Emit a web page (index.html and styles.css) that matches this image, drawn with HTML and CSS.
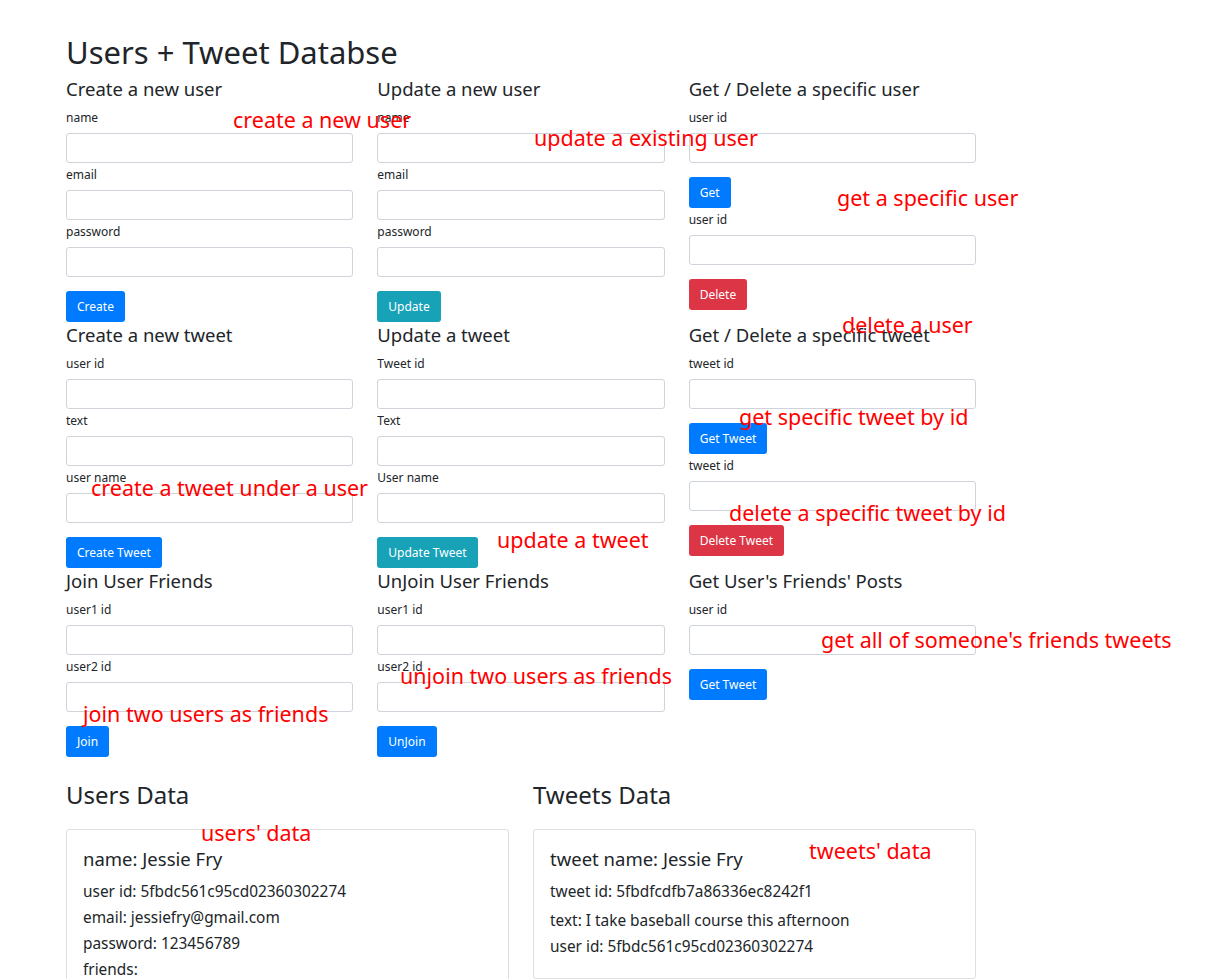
FILE: index.html
```html
<!DOCTYPE html>
<html lang="en">
<head>
<meta charset="utf-8">
<title>Users + Tweet Databse</title>
<link rel="stylesheet" href="styles.css">
</head>
<body>
<div class="page">
  <h1 class="title">Users + Tweet Databse</h1>

  <div class="forms">
    <div class="col">
      <h4 class="form-title">Create a new user</h4>
      <label class="field-label">name</label><input class="field" type="text">
      <label class="field-label">email</label><input class="field" type="text">
      <label class="field-label">password</label><input class="field" type="text">
      <button class="btn btn-primary">Create</button>
    </div>
    <div class="col">
      <h4 class="form-title">Update a new user</h4>
      <label class="field-label">name</label><input class="field" type="text">
      <label class="field-label">email</label><input class="field" type="text">
      <label class="field-label">password</label><input class="field" type="text">
      <button class="btn btn-info">Update</button>
    </div>
    <div class="col">
      <h4 class="form-title">Get / Delete a specific user</h4>
      <label class="field-label">user id</label><input class="field" type="text">
      <button class="btn btn-primary">Get</button>
      <label class="field-label">user id</label><input class="field" type="text">
      <button class="btn btn-danger">Delete</button>
    </div>

    <div class="col">
      <h4 class="form-title">Create a new tweet</h4>
      <label class="field-label">user id</label><input class="field" type="text">
      <label class="field-label">text</label><input class="field" type="text">
      <label class="field-label">user name</label><input class="field" type="text">
      <button class="btn btn-primary">Create Tweet</button>
    </div>
    <div class="col">
      <h4 class="form-title">Update a tweet</h4>
      <label class="field-label">Tweet id</label><input class="field" type="text">
      <label class="field-label">Text</label><input class="field" type="text">
      <label class="field-label">User name</label><input class="field" type="text">
      <button class="btn btn-info">Update Tweet</button>
    </div>
    <div class="col">
      <h4 class="form-title">Get / Delete a specific tweet</h4>
      <label class="field-label">tweet id</label><input class="field" type="text">
      <button class="btn btn-primary">Get Tweet</button>
      <label class="field-label">tweet id</label><input class="field" type="text">
      <button class="btn btn-danger">Delete Tweet</button>
    </div>

    <div class="col">
      <h4 class="form-title">Join User Friends</h4>
      <label class="field-label">user1 id</label><input class="field" type="text">
      <label class="field-label">user2 id</label><input class="field" type="text">
      <button class="btn btn-primary">Join</button>
    </div>
    <div class="col">
      <h4 class="form-title">UnJoin User Friends</h4>
      <label class="field-label">user1 id</label><input class="field" type="text">
      <label class="field-label">user2 id</label><input class="field" type="text">
      <button class="btn btn-primary">UnJoin</button>
    </div>
    <div class="col">
      <h4 class="form-title">Get User's Friends' Posts</h4>
      <label class="field-label">user id</label><input class="field" type="text">
      <button class="btn btn-primary">Get Tweet</button>
    </div>
  </div>

  <div class="data">
    <section class="data-col">
      <h2 class="data-title">Users Data</h2>
      <div class="card">
        <h4 class="card-title">name: Jessie Fry</h4>
        <p class="card-line">user id: 5fbdc561c95cd02360302274</p>
        <p class="card-line">email: jessiefry@gmail.com</p>
        <p class="card-line">password: 123456789</p>
        <p class="card-line">friends:</p>
        <p class="card-line">&nbsp;</p>
      </div>
    </section>
    <section class="data-col">
      <h2 class="data-title">Tweets Data</h2>
      <div class="card card-tweets">
        <h4 class="card-title">tweet name: Jessie Fry</h4>
        <p class="card-line card-line-gap">tweet id: 5fbdfcdfb7a86336ec8242f1</p>
        <p class="card-line">text: I take baseball course this afternoon</p>
        <p class="card-line">user id: 5fbdc561c95cd02360302274</p>
      </div>
    </section>
  </div>

  <span class="note n1">create a new user</span>
  <span class="note n2">update a existing user</span>
  <span class="note n3">get a specific user</span>
  <span class="note n4">delete a user</span>
  <span class="note n5">get specific tweet by id</span>
  <span class="note n6">create a tweet under a user</span>
  <span class="note n7">delete a specific tweet by id</span>
  <span class="note n8">update a tweet</span>
  <span class="note n9">get all of someone's friends tweets</span>
  <span class="note n10">unjoin two users as friends</span>
  <span class="note n11">join two users as friends</span>
  <span class="note n12">users' data</span>
  <span class="note n13">tweets' data</span>
</div>
</body>
</html>
```

FILE: styles.css
```css
* { box-sizing: border-box; }

html, body {
  margin: 0;
  padding: 0;
  background: #fff;
}

body {
  font-family: "Noto Sans", "Open Sans", sans-serif;
  color: #212529;
}

.page {
  position: relative;
  width: 976px;
  padding: 33px 0 0 66px;
}

.title {
  margin: 0 0 5px;
  font-size: 31px;
  line-height: 38px;
  font-weight: 400;
}

.forms {
  display: grid;
  grid-template-columns: repeat(3, 1fr);
  column-gap: 24px;
  align-items: start;
}

.col {
  display: flex;
  flex-direction: column;
  align-items: flex-start;
}

.form-title {
  margin: 0 0 5px;
  font-size: 18.5px;
  line-height: 25px;
  font-weight: 400;
}

.field-label {
  display: block;
  font-size: 12px;
  line-height: 20px;
  padding-top: 2px;
  margin-bottom: 5px;
}

.field {
  display: block;
  width: 100%;
  height: 30px;
  margin: 0;
  border: 1px solid #ced4da;
  border-radius: 3px;
  background: #fff;
}

.btn {
  margin-top: 14px;
  height: 31px;
  padding: 0 11px;
  border: 0;
  border-radius: 3px;
  color: #fff;
  font-family: inherit;
  font-size: 12px;
  line-height: 31px;
}

.btn-primary { background: #007bff; }
.btn-info { background: #17a2b8; }
.btn-danger { background: #dc3545; }

.data {
  display: grid;
  grid-template-columns: repeat(2, 1fr);
  column-gap: 24px;
  margin-top: 23px;
  width: 910px;
}

.data-title {
  margin: 0 0 19px;
  font-size: 24px;
  line-height: 30px;
  font-weight: 400;
}

.card {
  border: 1px solid rgba(0, 0, 0, 0.125);
  border-radius: 3px;
  padding: 16px;
}

.card-tweets { padding-bottom: 18px; }

.card-title {
  margin: 0 0 8px;
  font-size: 18.5px;
  line-height: 25px;
  font-weight: 400;
}

.card-line {
  margin: 0;
  font-size: 15.4px;
  line-height: 26px;
}

.card-line-gap { margin-bottom: 3px; }

.note {
  position: absolute;
  color: #ff0000;
  font-family: "Noto Sans", "Open Sans", sans-serif;
  font-size: 21.5px;
  line-height: 20px;
  white-space: nowrap;
}

.n1 { left: 233px; top: 110px; }
.n2 { left: 534px; top: 128px; }
.n3 { left: 837px; top: 188px; }
.n4 { left: 842px; top: 315px; }
.n5 { left: 739px; top: 407px; }
.n6 { left: 91px; top: 478px; }
.n7 { left: 729px; top: 503px; }
.n8 { left: 497px; top: 530px; }
.n9 { left: 821px; top: 630px; }
.n10 { left: 400px; top: 666px; }
.n11 { left: 83px; top: 704px; }
.n12 { left: 201px; top: 823px; }
.n13 { left: 809px; top: 841px; }
```
